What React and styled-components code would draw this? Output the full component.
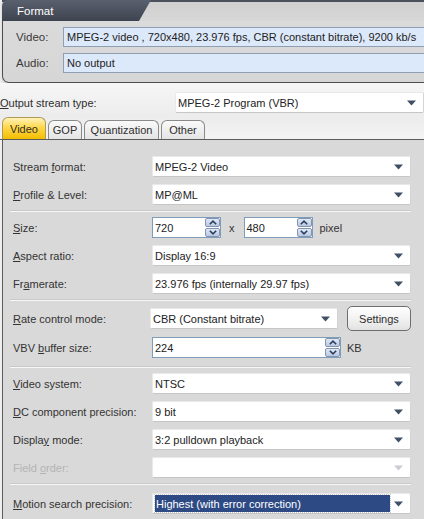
import React from "react";
import styled, { createGlobalStyle, css } from "styled-components";

const Global = createGlobalStyle`
  * { box-sizing: border-box; }
  html, body { margin: 0; padding: 0; }
  body {
    width: 424px; height: 519px; overflow: hidden;
    font-family: "Liberation Sans", Arial, sans-serif;
    font-size: 11px; color: #2b2b2b;
    background: #efefef;
  }
`;

const Page = styled.div`
  width: 424px; height: 519px; overflow: hidden;
  display: flex; flex-direction: column;
`;

/* ---------- Format panel ---------- */
const FormatPanel = styled.div`
  margin: 0 -12px 0 2px;
  height: 83px;
  border: 1px solid #4e4e4e;
  border-top: none;
  border-radius: 0 0 0 7px;
  background: linear-gradient(#dcdcdc, #d6d6d6);
  display: flex; flex-direction: column;
  box-shadow: 0 2px 3px rgba(0,0,0,0.15);
`;
const FormatHeader = styled.div`
  height: 21px;
  display: flex;
  border-top: 2px solid #4a505c;
  background: linear-gradient(#cfcfcf, #d8d8d8);
  margin-left: -1px;
`;
const FormatTab = styled.div`
  width: 149px;
  margin-top: -2px; height: 21px;
  background: linear-gradient(#5a616e, #3d434f);
  clip-path: polygon(0 0, 100% 0, 137px 100%, 0 100%);
  border-top-left-radius: 6px;
  color: #fff; font-size: 11.5px;
  display: flex; align-items: center; padding-left: 15px;
`;
const FormatBody = styled.div`
  display: flex; flex-direction: column; gap: 6px;
  padding: 6px 0 0 0;
`;
const FormatRow = styled.div`
  display: flex; align-items: center; height: 20px;
`;
const FormatLabel = styled.div`
  width: 60px; padding-left: 13px; color: #3a3a3a; font-size: 11.5px;
`;
const InfoField = styled.div`
  flex: 1; height: 100%;
  background: #dce9fa;
  border: 1px solid #8f9fb3;
  border-right: none;
  display: flex; align-items: center; padding-left: 3px;
  color: #222; font-size: 11px; white-space: nowrap;
`;

/* ---------- Output stream type ---------- */
const OutputArea = styled.div`
  height: 57px;
  background: linear-gradient(#f6f6f6, #ececec 60%, #f4f4f4);
  display: flex; flex-direction: column;
  padding-top: 9px;
`;
const OutputRow = styled.div`
  display: flex; align-items: center; height: 21px;
`;
const OutputLabel = styled.div`
  width: 175px; font-size: 11px; color: #2e2e2e;
`;

/* ---------- Tabs ---------- */
const TabStrip = styled.div`
  display: flex; align-items: flex-end; gap: 2px;
  padding-left: 2px; margin-top: 5px; height: 22px;
  border-bottom: 1px solid #5b5b5b;
`;
const Tab = styled.div`
  height: ${p => (p.$active ? "22px" : "19px")};
  width: ${p => p.$w}px;
  border: 1px solid #8a8a8a; border-bottom: none;
  border-radius: 6px 6px 0 0;
  display: flex; align-items: center; justify-content: center;
  font-size: 11px; color: #2e2e2e;
  ${p => p.$active ? css`
    background: linear-gradient(#fff2b8, #ffd84a 45%, #f2bd00);
    border-color: #b09a55;
  ` : css`
    background: linear-gradient(#fafafa, #e4e4e4);
  `}
`;

/* ---------- Content panel ---------- */
const Content = styled.div`
  flex: 1;
  margin-left: 2px;
  border-left: 1px solid #5b5b5b;
  background: #d9d9d9;
  padding: 16px 13px 0 8px;
  display: flex; flex-direction: column;
`;
const Group = styled.div`
  display: flex; flex-direction: column; gap: ${p => p.$gap ?? 7}px;
  padding-top: ${p => p.$pt ?? 0}px;
  padding-bottom: ${p => p.$pb ?? 0}px;
`;
const Separator = styled.div`
  height: 2px; margin: 5px 0 5px -1px;
  border-top: 1px solid #c9c9c9;
  border-bottom: 1px solid #f7f7f7;
`;
const Row = styled.div`
  display: flex; align-items: center; height: ${p => p.$h ?? 21}px;
`;
const Label = styled.div`
  width: 141px; padding-left: 2px; font-size: 11px;
  color: ${p => (p.$disabled ? "#b4b4b4" : "#333")};
  white-space: nowrap;
`;
const U = styled.span` text-decoration: underline; `;

const SelectBox = styled.div`
  position: relative;
  width: ${p => (p.$w ? p.$w + "px" : "auto")};
  flex: ${p => (p.$w ? "none" : "1")};
  height: 21px;
  background: #fff;
  border: 1px solid #e9e9e9;
  border-bottom-color: #c6c6c6;
  border-right-color: #d4d4d4;
  border-radius: 2px;
  display: flex; align-items: center;
  padding-left: 2px; padding-right: 20px;
  font-size: 11px; color: #222; white-space: nowrap;
`;
const Highlight = styled.div`
  flex: 1; height: 17px;
  background: #2d4a85; color: #fff;
  outline: 1px dotted #c8c8c8;
  display: flex; align-items: center; padding-left: 1px;
`;
const Arrow = styled.svg`
  position: absolute; right: 7px; top: 7px;
`;
const InputBox = styled.div`
  width: ${p => p.$w}px; height: 21px;
  background: #fff;
  border: 1px solid #7f9db9;
  display: flex; align-items: center;
  padding-left: 2px;
  font-size: 11px; color: #222;
`;
const InputText = styled.div` flex: 1; `;
const Spin = styled.div`
  width: 15px; height: 19px;
  display: flex; flex-direction: column; gap: 1px;
`;
const SpinHalf = styled.div`
  flex: 1;
  background: linear-gradient(#dfe8f6, #b9c9e2);
  border: 1px solid #8394b0;
  border-radius: 2px;
  display: flex; align-items: center; justify-content: center;
`;
const Unit = styled.div`
  font-size: 11px; color: #333;
  margin: 0 ${p => p.$mr ?? 0}px 0 ${p => p.$ml ?? 6}px;
`;
const Button = styled.div`
  margin-left: 9px;
  width: 65px; height: 25px;
  border: 1px solid #6e6e6e;
  border-radius: 5px;
  background: linear-gradient(#ffffff, #f2f2f2 50%, #e2e2e2);
  display: flex; align-items: center; justify-content: center;
  font-size: 11px; color: #2e2e2e;
`;

const DropArrow = ({ disabled }) => (
  <Arrow width="9" height="6" viewBox="0 0 9 6">
    <path d="M0 0.5 H9 L4.5 5.5 Z" fill={disabled ? "#c9cdd2" : "#3f5064"} />
  </Arrow>
);

const Select = ({ children, w, disabled, selected }) => (
  <SelectBox $w={w}>
    {selected ? <Highlight>{children}</Highlight> : children}
    <DropArrow disabled={disabled} />
  </SelectBox>
);

const Chevron = ({ up }) => (
  <svg width="8" height="5" viewBox="0 0 8 5">
    <path
      d={up ? "M0.8 4.3 L4 1.2 L7.2 4.3" : "M0.8 0.7 L4 3.8 L7.2 0.7"}
      fill="none" stroke="#2c3e5c" strokeWidth="1.6"
    />
  </svg>
);

const SpinInput = ({ w, value }) => (
  <InputBox $w={w}>
    <InputText>{value}</InputText>
    <Spin>
      <SpinHalf><Chevron up /></SpinHalf>
      <SpinHalf><Chevron /></SpinHalf>
    </Spin>
  </InputBox>
);

export default function App() {
  return (
    <Page>
      <Global />
      <FormatPanel>
        <FormatHeader>
          <FormatTab>Format</FormatTab>
        </FormatHeader>
        <FormatBody>
          <FormatRow>
            <FormatLabel>Video:</FormatLabel>
            <InfoField>MPEG-2 video , 720x480, 23.976 fps, CBR (constant bitrate), 9200 kb/s</InfoField>
          </FormatRow>
          <FormatRow>
            <FormatLabel>Audio:</FormatLabel>
            <InfoField>No output</InfoField>
          </FormatRow>
        </FormatBody>
      </FormatPanel>

      <OutputArea>
        <OutputRow>
          <OutputLabel><U>O</U>utput stream type:</OutputLabel>
          <Select>MPEG-2 Program (VBR)</Select>
        </OutputRow>
        <TabStrip>
          <Tab $active $w={44}>Video</Tab>
          <Tab $w={34}>GOP</Tab>
          <Tab $w={75}>Quantization</Tab>
          <Tab $w={44}>Other</Tab>
        </TabStrip>
      </OutputArea>

      <Content>
        <Group>
          <Row>
            <Label>Stream <U>f</U>ormat:</Label>
            <Select>MPEG-2 Video</Select>
          </Row>
          <Row>
            <Label><U>P</U>rofile &amp; Level:</Label>
            <Select>MP@ML</Select>
          </Row>
        </Group>
        <Separator />
        <Group>
          <Row>
            <Label><U>S</U>ize:</Label>
            <SpinInput w={69} value="720" />
            <Unit $ml={8} $mr={9}>x</Unit>
            <SpinInput w={69} value="480" />
            <Unit $ml={7}>pixel</Unit>
          </Row>
          <Row>
            <Label><U>A</U>spect ratio:</Label>
            <Select>Display 16:9</Select>
          </Row>
          <Row>
            <Label>Fr<U>a</U>merate:</Label>
            <Select>23.976 fps (internally 29.97 fps)</Select>
          </Row>
        </Group>
        <Separator />
        <Group $gap={6} $pb={3}>
          <Row $h={25}>
            <Label><U>R</U>ate control mode:</Label>
            <Select w={188}>CBR (Constant bitrate)</Select>
            <Button>Settings</Button>
          </Row>
          <Row>
            <Label>VBV <U>b</U>uffer size:</Label>
            <SpinInput w={189} value="224" />
            <Unit $ml={6}>KB</Unit>
          </Row>
        </Group>
        <Separator />
        <Group>
          <Row>
            <Label><U>V</U>ideo system:</Label>
            <Select>NTSC</Select>
          </Row>
          <Row>
            <Label><U>D</U>C component precision:</Label>
            <Select>9 bit</Select>
          </Row>
          <Row>
            <Label>Displa<U>y</U> mode:</Label>
            <Select>3:2 pulldown playback</Select>
          </Row>
          <Row>
            <Label $disabled>Field <U>o</U>rder:</Label>
            <Select disabled></Select>
          </Row>
        </Group>
        <Separator />
        <Group $pt={3}>
          <Row>
            <Label><U>M</U>otion search precision:</Label>
            <Select selected>Highest (with error correction)</Select>
          </Row>
        </Group>
      </Content>
    </Page>
  );
}
